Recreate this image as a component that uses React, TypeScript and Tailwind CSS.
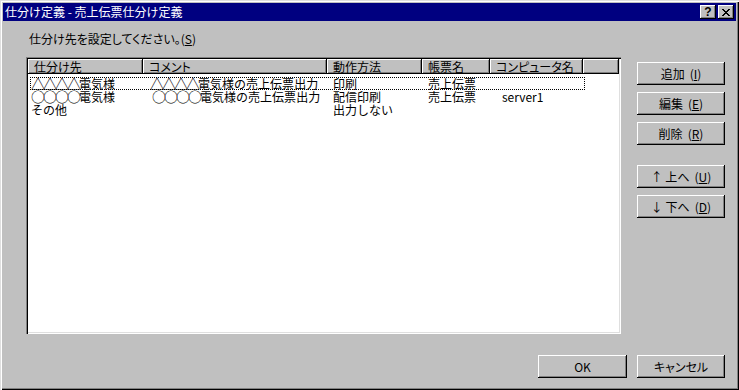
import React from 'react';

const font = "font-['Noto_Sans_CJK_JP',sans-serif]";
const palt = "[font-feature-settings:'palt']";
const raised =
  'shadow-[inset_-1px_-1px_0_#000,inset_1px_1px_0_#fff,inset_-2px_-2px_0_#808080]';

type Row = { dest: string; comment: string; action: string; form: string; pc: string };

const rows: Row[] = [
  { dest: '△△△△電気様', comment: '△△△△電気様の売上伝票出力', action: '印刷', form: '売上伝票', pc: '' },
  { dest: '○○○○電気様', comment: '○○○○電気様の売上伝票出力', action: '配信印刷', form: '売上伝票', pc: 'server1' },
  { dest: 'その他', comment: '', action: '出力しない', form: '', pc: '' },
];

const columns = [
  { label: '仕分け先', w: 'w-[115px]' },
  { label: 'コメント', w: 'w-[184px]' },
  { label: '動作方法', w: 'w-[95px]' },
  { label: '帳票名', w: 'w-[68px]' },
  { label: 'コンピュータ名', w: 'w-[93px]' },
];

// symbols like △ / ○ are full width in the original font
function Wide({ text }: { text: string }) {
  return (
    <>
      {Array.from(text).map((ch, i) =>
        ch === '△' || ch === '○' ? (
          <span key={i} className="inline-block w-[12px] text-center text-[14px] leading-[13px] align-top">
            {ch}
          </span>
        ) : (
          <React.Fragment key={i}>{ch}</React.Fragment>
        )
      )}
    </>
  );
}

function Btn({ label, k, className = '' }: { label: string; k?: string; className?: string }) {
  return (
    <button
      className={`h-[23px] w-[88px] bg-[#c0c0c0] ${raised} ${palt} text-[12px] leading-none text-black flex items-center justify-center ${className}`}
    >
      {label}
      {k && (
        <span className="ml-[5px]">
          (<u>{k}</u>)
        </span>
      )}
    </button>
  );
}

export default function App() {
  return (
    <div
      className={`${font} w-[739px] h-[390px] bg-[#c0c0c0] p-[3px] flex flex-col shadow-[inset_1px_1px_0_#dfdfdf,inset_2px_2px_0_#fff,inset_-1px_-1px_0_#000,inset_-2px_-2px_0_#808080]`}
    >
      {/* title bar */}
      <div className="h-[18px] bg-[#000080] flex items-center pl-[2px] pr-[2px]">
        <span className="text-white text-[12px] leading-none">仕分け定義 - 売上伝票仕分け定義</span>
        <div className="ml-auto flex gap-[2px]">
          <div className={`w-[16px] h-[14px] bg-[#c0c0c0] ${raised} flex items-center justify-center`}>
            <span className="text-[12px] font-bold leading-none font-['Liberation_Sans',sans-serif] text-black">?</span>
          </div>
          <div className={`w-[16px] h-[14px] bg-[#c0c0c0] ${raised} flex items-center justify-center`}>
            <svg width="8" height="7" viewBox="0 0 8 7" shapeRendering="crispEdges">
              <path d="M0 0h2v1h-2zM6 0h2v1h-2zM1 1h2v1h-2zM5 1h2v1h-2zM2 2h4v1h-4zM3 3h2v1h-2zM2 4h4v1h-4zM1 5h2v1h-2zM5 5h2v1h-2zM0 6h2v1h-2zM6 6h2v1h-2z" fill="#000" />
            </svg>
          </div>
        </div>
      </div>

      {/* body */}
      <div className="flex-1 flex flex-col">
        <div className="flex">
          <div className="flex flex-col pl-[23px]">
            <div className={`${palt} mt-[10px] h-[16px] text-[12px] leading-[16px] text-black pl-[3px]`}>
              仕分け先を設定してください。(<u>S</u>)
            </div>
            <div className="mt-[10px] w-[595px] h-[277px] bg-white p-[2px] shadow-[inset_1px_1px_0_#808080,inset_2px_2px_0_#000,inset_-1px_-1px_0_#fff,inset_-2px_-2px_0_#dfdfdf]">
              <div className="flex h-[15px]">
                {columns.map(c => (
                  <div
                    key={c.label}
                    className={`${c.w} h-full bg-[#c0c0c0] ${raised} ${palt} text-[12px] leading-[15px] text-black pl-[6px] whitespace-nowrap overflow-hidden`}
                  >
                    {c.label}
                  </div>
                ))}
                <div className={`flex-1 h-full bg-[#c0c0c0] ${raised}`} />
              </div>
              <div className="pt-[3px] pl-[2px] text-[12px] text-black">
                {rows.map((r, i) => (
                  <div
                    key={i}
                    className={`flex w-[555px] h-[13px] leading-[13px] ${i === 0 ? 'outline outline-1 outline-dotted outline-black -outline-offset-1' : ''}`}
                  >
                    <div className="w-[113px] pl-[1px] whitespace-nowrap">
                      <Wide text={r.dest} />
                    </div>
                    <div className={`w-[184px] whitespace-nowrap ${i === 1 ? 'pl-[9px]' : 'pl-[7px]'}`}>
                      <Wide text={r.comment} />
                    </div>
                    <div className="w-[95px] pl-[6px] whitespace-nowrap">{r.action}</div>
                    <div className="w-[68px] pl-[6px] whitespace-nowrap">{r.form}</div>
                    <div className="w-[93px] pl-[12px] whitespace-nowrap">{r.pc}</div>
                  </div>
                ))}
              </div>
            </div>
          </div>

          <div className="ml-[16px] mt-[41px] flex flex-col">
            <Btn label="追加" k="I" />
            <Btn label="編集" k="E" className="mt-[7px]" />
            <Btn label="削除" k="R" className="mt-[7px]" />
            <Btn label="↑ 上へ" k="U" className="mt-[20px]" />
            <Btn label="↓ 下へ" k="D" className="mt-[7px]" />
          </div>
        </div>

        <div className="mt-[21px] flex justify-end gap-[10px] pr-[11px]">
          <Btn label="OK" className="w-[89px]" />
          <Btn label="キャンセル" />
        </div>
      </div>
    </div>
  );
}
